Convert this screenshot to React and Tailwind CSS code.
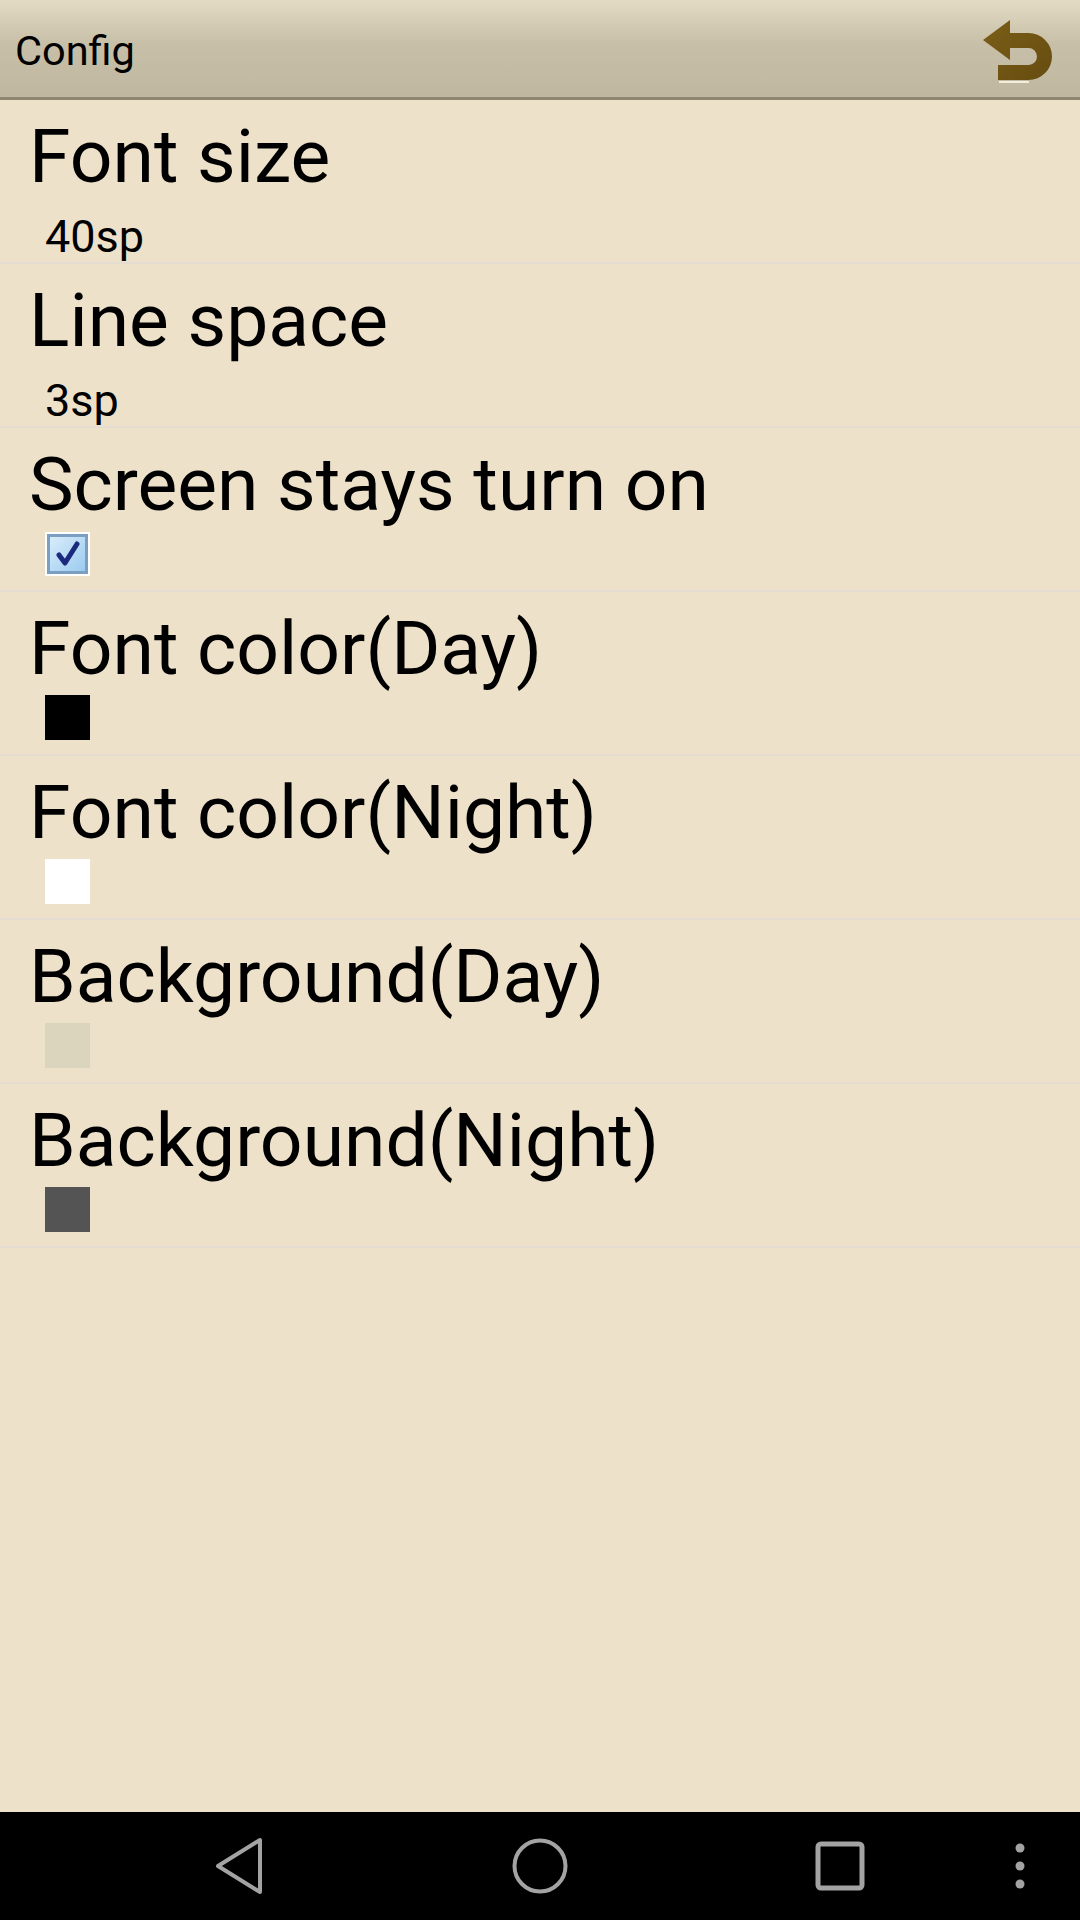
import React from 'react';

// config screen of a reader app
const rows = [
  { title: 'Font size', kind: 'text', value: '40sp' },
  { title: 'Line space', kind: 'text', value: '3sp' },
  { title: 'Screen stays turn on', kind: 'check' },
  { title: 'Font color(Day)', kind: 'color', color: 'bg-[#000000]' },
  { title: 'Font color(Night)', kind: 'color', color: 'bg-[#ffffff]' },
  { title: 'Background(Day)', kind: 'color', color: 'bg-[#dcd5bd]' },
  { title: 'Background(Night)', kind: 'color', color: 'bg-[#545454]' },
];

const BackIcon = () => (
  <svg width="80" height="72" viewBox="0 0 80 72">
    <defs>
      <linearGradient id="arr" x1="0" y1="0" x2="1" y2="1">
        <stop offset="0" stopColor="#7a5e18" />
        <stop offset="1" stopColor="#664c10" />
      </linearGradient>
    </defs>
    <path d="M21,68 L51,68" stroke="#f4eedc" strokeWidth="2" />
    <path
      d="M5,26 L32,6 L32,19 L50.5,19 A23.5,23.5 0 0 1 50.5,66 L20,66 L20,51 L50.5,51 A8.5,8.5 0 0 0 50.5,34 L32,34 L32,46 Z"
      fill="url(#arr)"
    />
  </svg>
);

const CheckBox = () => (
  <div className="w-[45px] h-[44px] bg-white p-[2px]">
    <div className="w-full h-full border-[3px] border-[#7b9fc0] bg-gradient-to-br from-[#d8ecfb] to-[#9ccbef] flex items-center justify-center">
      <svg width="30" height="30" viewBox="0 0 30 30">
        <path
          d="M6,16 L12,24 L24,5"
          fill="none"
          stroke="#1b2a7c"
          strokeWidth="5"
          strokeLinecap="round"
          strokeLinejoin="round"
        />
      </svg>
    </div>
  </div>
);

const Row = ({ row }) => (
  <div className="pt-[12px] h-[164px] border-b-2 border-[#e5ddd2]">
    <div className="pl-[29px] h-[88px] text-[75px] leading-[88px] text-black whitespace-nowrap">
      {row.title}
    </div>
    <div className="h-[62px] pl-[45px]">
      {row.kind === 'text' && (
        <div className="pt-[10px] text-[45px] leading-[53px] text-black">{row.value}</div>
      )}
      {row.kind === 'check' && (
        <div className="pt-[4px]">
          <CheckBox />
        </div>
      )}
      {row.kind === 'color' && (
        <div className="pt-[3px]">
          <div className={`w-[45px] h-[45px] ${row.color}`} />
        </div>
      )}
    </div>
  </div>
);

export default function App() {
  return (
    <div className="w-[1080px] h-[1920px] flex flex-col bg-[#eee1ca] font-['Roboto',sans-serif]">
      {/* шапка */}
      <div className="h-[100px] shrink-0 flex items-center justify-between border-b-[3px] border-[#8e866f] bg-gradient-to-b from-[#e4dbc5] via-[#c8bfa8] via-45% to-[#c0b7a0]">
        <div className="pl-[15px] pt-[6px] text-[41.5px] text-black">Config</div>
        <div className="pr-[22px] pt-[2px]">
          <BackIcon />
        </div>
      </div>

      <div className="flex-1">
        {rows.map(r => (
          <Row key={r.title} row={r} />
        ))}
      </div>

      {/* навігація */}
      <div className="h-[108px] shrink-0 bg-black flex items-center">
        <div className="ml-[191px] w-[100px] flex justify-center">
          <svg width="52" height="58" viewBox="0 0 52 58">
            <path d="M45,3 L45,55 L3,29 Z" fill="none" stroke="#a3a3a3" strokeWidth="4" strokeLinejoin="round" />
          </svg>
        </div>
        <div className="ml-[199px] w-[100px] flex justify-center">
          <svg width="58" height="58" viewBox="0 0 58 58">
            <circle cx="29" cy="29" r="25.5" fill="none" stroke="#a3a3a3" strokeWidth="4" />
          </svg>
        </div>
        <div className="ml-[200px] w-[100px] flex justify-center">
          <svg width="50" height="50" viewBox="0 0 50 50">
            <rect x="3" y="3" width="44" height="44" rx="3" fill="none" stroke="#a3a3a3" strokeWidth="5" />
          </svg>
        </div>
        <div className="ml-[120px] w-[20px] flex justify-center">
          <svg width="12" height="48" viewBox="0 0 12 48">
            <circle cx="6" cy="6" r="4.5" fill="#a3a3a3" />
            <circle cx="6" cy="24" r="4.5" fill="#a3a3a3" />
            <circle cx="6" cy="42" r="4.5" fill="#a3a3a3" />
          </svg>
        </div>
      </div>
    </div>
  );
}
